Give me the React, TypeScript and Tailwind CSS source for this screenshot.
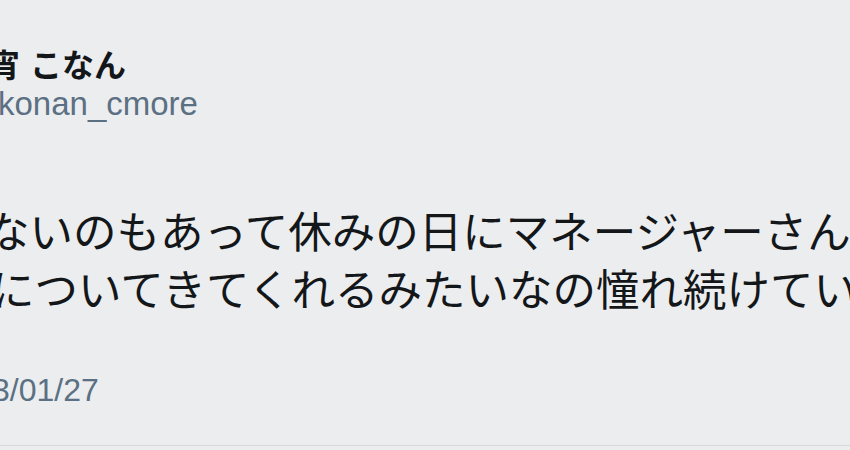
import React from "react";

const jp = { fontFamily: '"Noto Sans CJK JP", "Noto Sans", sans-serif' };
const latin = { fontFamily: '"Liberation Sans", Arial, sans-serif' };

export default function App() {
  return (
    <div className="w-[850px] h-[450px] bg-[#ECEDEF] overflow-hidden flex flex-col">
      {/* author */}
      <div className="pt-[44px] whitespace-nowrap">
        <div className="flex text-[32px] leading-[38px] font-bold text-[#14171A] -ml-[12px]" style={jp}>
          <span>宵</span>
          <span className="ml-[10px]">こなん</span>
        </div>
        <div className="mt-[3px] text-[33px] leading-[38px] text-[#5B7083] -ml-[2px]" style={latin}>
          konan_cmore
        </div>
      </div>

      {/* tweet body */}
      <div className="mt-[78px] text-[43.5px] leading-[58px] text-[#14171A] whitespace-nowrap" style={jp}>
        <div className="-ml-[14px]">ないのもあって休みの日にマネージャーさん</div>
        <div className="-ml-[9px]">についてきてくれるみたいなの憧れ続けてい</div>
      </div>

      {/* date */}
      <div className="mt-[54px] text-[32px] leading-[38px] text-[#5B7083] whitespace-nowrap -ml-[8px]" style={latin}>
        3/01/27
      </div>

      <div className="mt-[36px] border-b border-[#D6DADE]" />
    </div>
  );
}
